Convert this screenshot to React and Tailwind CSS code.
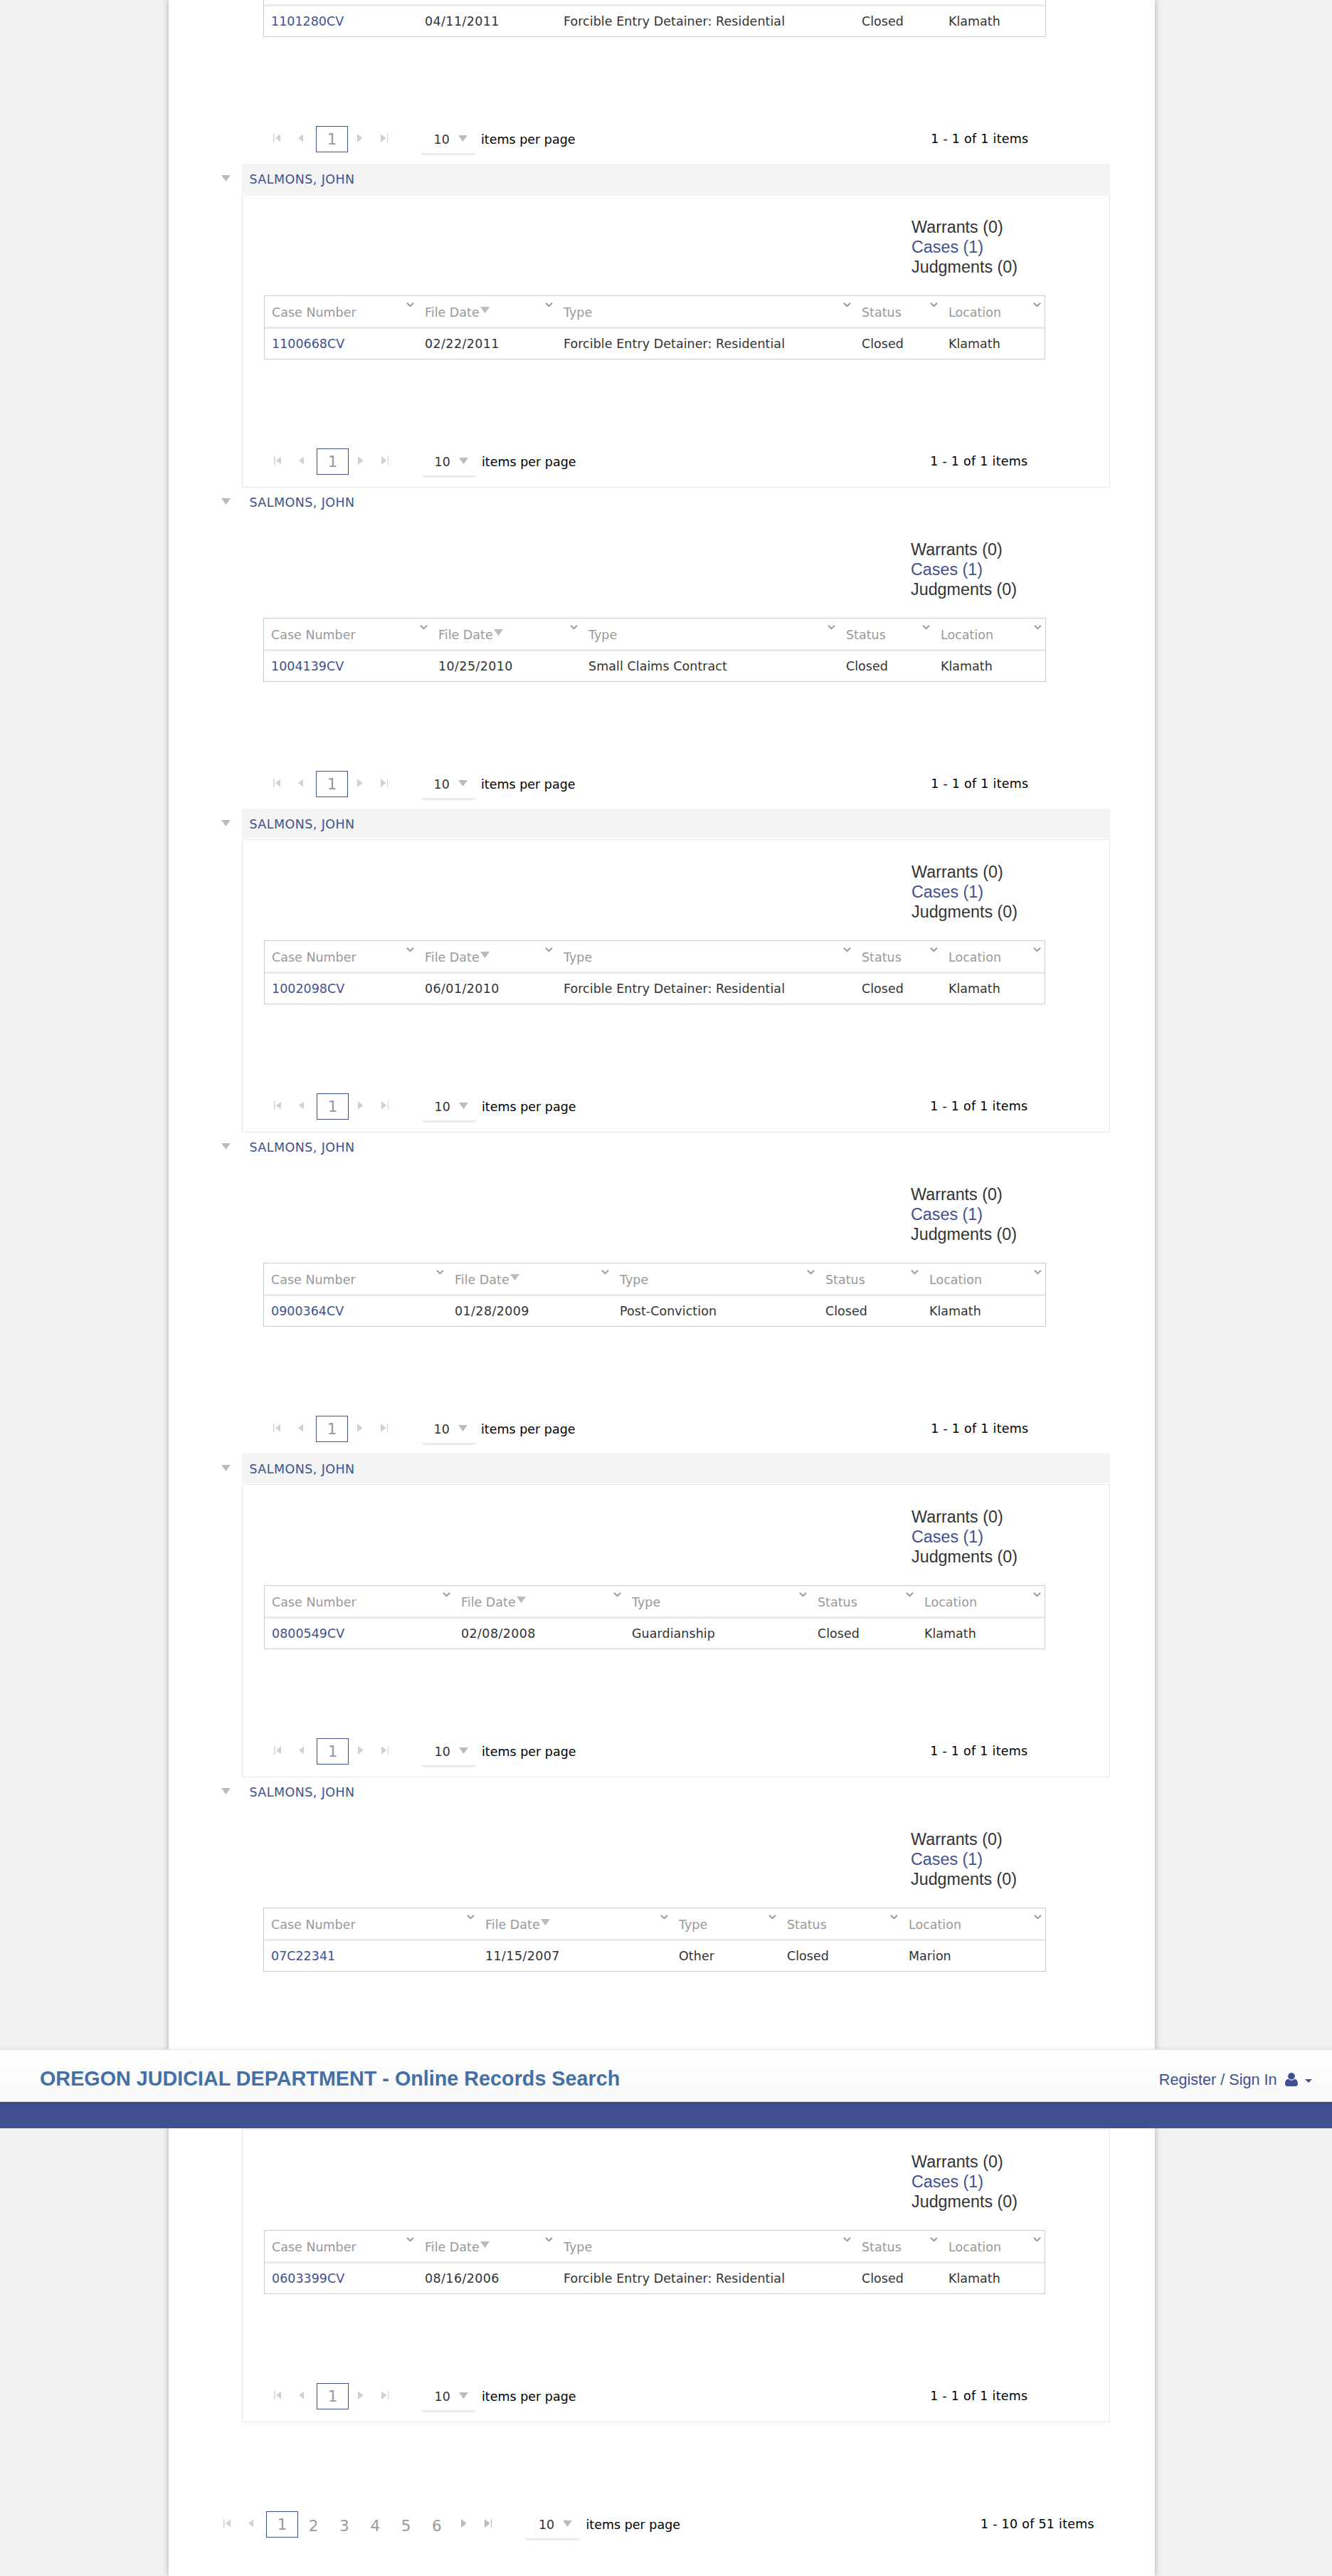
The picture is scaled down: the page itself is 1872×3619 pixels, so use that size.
import React from "react";

const SANS = "font-['Verdana','DejaVu_Sans',sans-serif]";
const ARIAL = "font-['Arial','Liberation_Sans',sans-serif]";

const WIDE = [215, 195, 419, 122];

const records = [
  { number: "1101280CV", date: "04/11/2011", type: "Forcible Entry Detainer: Residential", location: "Klamath", cols: [216, 195, 419, 122] },
  { number: "1100668CV", date: "02/22/2011", type: "Forcible Entry Detainer: Residential", location: "Klamath", cols: WIDE, boxed: true },
  { number: "1004139CV", date: "10/25/2010", type: "Small Claims Contract", location: "Klamath", cols: [235, 211, 362, 133] },
  { number: "1002098CV", date: "06/01/2010", type: "Forcible Entry Detainer: Residential", location: "Klamath", cols: WIDE, boxed: true },
  { number: "0900364CV", date: "01/28/2009", type: "Post-Conviction", location: "Klamath", cols: [258, 232, 289, 146] },
  { number: "0800549CV", date: "02/08/2008", type: "Guardianship", location: "Klamath", cols: [266, 240, 261, 150], boxed: true },
  { number: "07C22341", date: "11/15/2007", type: "Other", location: "Marion", cols: [301, 272, 152, 171] },
  { number: "0603399CV", date: "08/16/2006", type: "Forcible Entry Detainer: Residential", location: "Klamath", cols: WIDE, boxed: true },
];

function DownTriangle({ className = "" }) {
  return (
    <svg viewBox="0 0 13 9" className={`h-[9px] w-[13px] shrink-0 fill-[#bbbbbb] ${className}`}>
      <path d="M0 0H13L6.5 9Z" />
    </svg>
  );
}

function Chevron() {
  return (
    <svg viewBox="0 0 11 7" className="absolute top-[9px] right-[5px] h-[7px] w-[11px]" fill="none" stroke="#999999" strokeWidth="2">
      <path d="M1 0.8L5.5 5.2L10 0.8" />
    </svg>
  );
}

function PageArrow({ kind, active, className = "" }) {
  const bar = kind === "first" || kind === "last";
  const d = {
    first: "M0 0H1.5V12H0ZM10.5 0V12L3 6Z",
    prev: "M7.5 0V12L0 6Z",
    next: "M0 0V12L7.5 6Z",
    last: "M0 0V12L7.5 6ZM9 0H10.5V12H9Z",
  }[kind];
  return (
    <svg
      viewBox={bar ? "0 0 10.5 12" : "0 0 7.5 12"}
      className={`mt-[11px] h-[12px] shrink-0 ${bar ? "w-[10.5px]" : "w-[7.5px]"} ${active ? "fill-[#bbbbbb]" : "fill-[#d0d1d2]"} ${className}`}
    >
      <path d={d} />
    </svg>
  );
}

function Pager({ pages, summary, summaryClass }) {
  const many = pages.length > 1;
  return (
    <div className={`flex h-[41px] items-start text-[17.5px] leading-[38px] text-black ${SANS}`}>
      <PageArrow kind="first" className="ml-[13.5px]" />
      <PageArrow kind="prev" className="ml-[24.5px]" />
      <span className="ml-[18px] h-[37px] w-[45px] shrink-0 border border-[#415190] text-center text-[21.5px] leading-[35px] text-[#999999]">1</span>
      {many && (
        <div className="flex">
          {pages.slice(1).map((p) => (
            <span key={p} className="w-[43.3px] text-center text-[21.5px] leading-[42px] text-[#999999]">{p}</span>
          ))}
        </div>
      )}
      <PageArrow kind="next" active={many} className={many ? "ml-[12.5px]" : "ml-[12.5px]"} />
      <PageArrow kind="last" active={many} className="ml-[25.5px]" />
      <span className={`flex h-[41px] w-[78px] shrink-0 rounded-b-[5px] border-b-[3px] border-[#ebebeb] pl-[19px] text-[#333333] ${many ? "ml-[46.5px]" : "ml-[45.5px]"}`}>
        <span>10</span>
        <DownTriangle className="mt-[13px] ml-[12px]" />
      </span>
      <span className="ml-[7.5px] whitespace-nowrap">items per page</span>
      <span className={`-mt-px ml-auto whitespace-nowrap tracking-[0.015em] ${summaryClass}`}>{summary}</span>
    </div>
  );
}

function HeadCell({ label, sorted, width }) {
  return (
    <div className={`relative flex h-[43px] pt-px pl-[10px] leading-[44px] text-[#999999] ${width === undefined ? "flex-1" : "shrink-0"}`} style={{ width }}>
      <span className="whitespace-nowrap">{label}</span>
      {sorted && <DownTriangle className="mt-[14px] ml-px" />}
      <Chevron />
    </div>
  );
}

function Cell({ children, width, className = "" }) {
  return (
    <div className={`pl-[10px] whitespace-nowrap ${width === undefined ? "flex-1" : "shrink-0"} ${className}`} style={{ width }}>
      {children}
    </div>
  );
}

function CaseTable({ record }) {
  const [a, b, c, d] = record.cols;
  return (
    <div className="mt-[26px] h-[90px] border border-[#cccccc] text-[17.5px]">
      <div className="flex h-[46px] border-b-[3px] border-[#ebebeb]">
        <HeadCell label="Case Number" width={a} />
        <HeadCell label="File Date" width={b} sorted />
        <HeadCell label="Type" width={c} />
        <HeadCell label="Status" width={d} />
        <HeadCell label="Location" />
      </div>
      <div className="flex h-[42px] leading-[42px] text-[#333333]">
        <Cell width={a} className="text-[#415190]">{record.number}</Cell>
        <Cell width={b} className="tracking-[0.023em]">{record.date}</Cell>
        <Cell width={c} className="tracking-[0.003em]">{record.type}</Cell>
        <Cell width={d}>Closed</Cell>
        <Cell>{record.location}</Cell>
      </div>
    </div>
  );
}

function Party({ record }) {
  return (
    <section className={`flex ${SANS}`}>
      <DownTriangle className={`ml-[74px] ${record.boxed ? "mt-4" : "mt-[15px]"}`} />
      <div className="ml-4 w-[1220px]">
        <h3 className={`h-[42px] pl-[10.5px] text-[17.5px] tracking-[0.024em] text-[#415190] ${record.boxed ? "bg-[#f4f4f4] leading-[44px]" : "leading-[42px]"}`}>
          SALMONS, JOHN
        </h3>
        <div className={record.boxed ? "mt-px border border-[#e8e8e8] pb-px" : ""}>
          <div className="h-[409px] pt-[31px] pr-[90px] pl-[30px]">
            <ul className={`ml-[910px] h-[84px] text-[23.33px] leading-[28px] text-[#333333] ${ARIAL}`}>
              <li>Warrants (0)</li>
              <li className="text-[#415190]">Cases (1)</li>
              <li>Judgments (0)</li>
            </ul>
            <CaseTable record={record} />
            <div className="mt-[125px]">
              <Pager pages={[1]} summary="1 - 1 of 1 items" summaryClass="mr-[24.5px]" />
            </div>
          </div>
        </div>
      </div>
    </section>
  );
}

function SiteHeader() {
  return (
    <header className={`absolute top-[2879px] left-0 w-full ${ARIAL}`}>
      <div className="flex h-[74px] items-start justify-between border-y border-[#e7e7e7] bg-linear-to-b from-white to-[#f8f8f8] shadow-[0_0_6px_rgba(0,0,0,0.08)]">
        <h1 className="mt-[21px] ml-[56px] text-[28.75px] leading-[38px] font-bold whitespace-nowrap text-[#4570a5]">
          OREGON JUDICIAL DEPARTMENT - Online Records Search
        </h1>
        <div className="mt-[29px] mr-[28px] flex items-start text-[21.6px] leading-[26px] text-[#415190]">
          <span className="whitespace-nowrap">Register / Sign In</span>
          <svg viewBox="0 0 18 19" className="mt-[3px] ml-[11.5px] h-[19px] w-[18px] fill-[#415190]">
            <ellipse cx="9" cy="4.8" rx="4.9" ry="4.8" />
            <path d="M4.6 8.8C1.4 9.2 0 12 0 15.6C0 17.8 1.4 19 3.4 19H14.6C16.6 19 18 17.8 18 15.6C18 12 16.6 9.2 13.4 8.8C12.2 10 10.7 10.7 9 10.7C7.3 10.7 5.8 10 4.6 8.8Z" />
          </svg>
          <svg viewBox="0 0 10 5" className="mt-[12px] ml-[10px] h-[5px] w-[10px] fill-[#415190]">
            <path d="M0 0H10L5 5Z" />
          </svg>
        </div>
      </div>
      <div className="h-[37px] bg-[#415190] shadow-[inset_0_4px_5px_-2px_rgba(0,0,0,0.15)]" />
    </header>
  );
}

export default function App() {
  return (
    <div className="relative h-[3619px] w-[1872px] overflow-hidden bg-[#f1f1f1]">
      <main className="ml-[237px] h-full w-[1385.5px] overflow-hidden bg-white">
        <div className="-mt-[221px]">
          {records.map((record) => (
            <Party key={record.number} record={record} />
          ))}
        </div>
        <div className="mt-[125px] w-[1323px] pl-[63px]">
          <Pager pages={[1, 2, 3, 4, 5, 6]} summary="1 - 10 of 51 items" summaryClass="mr-[22px]" />
        </div>
      </main>
      <div className="pointer-events-none absolute inset-y-0 left-[237px] w-[1385.5px] shadow-[0_0_8px_rgba(0,0,0,0.3)]" />
      <SiteHeader />
    </div>
  );
}
